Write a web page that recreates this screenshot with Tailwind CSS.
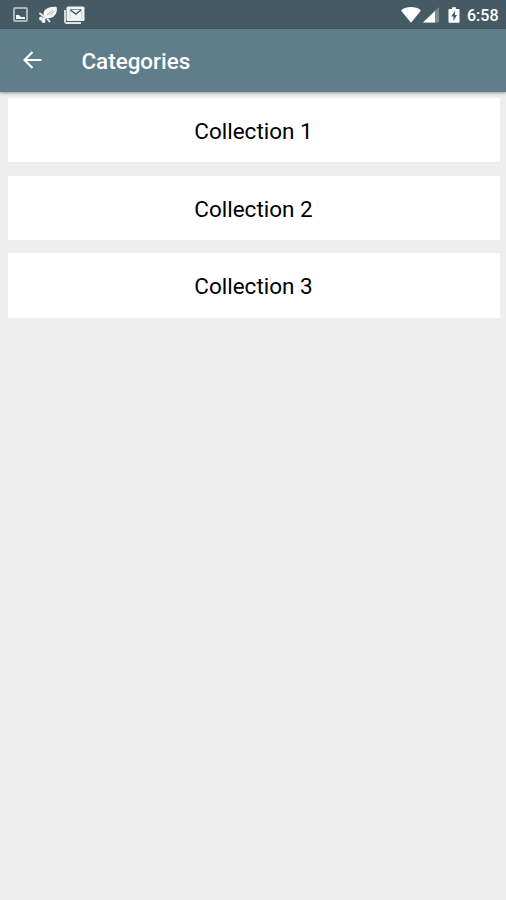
<!DOCTYPE html>
<html lang="en">
<head>
    <meta charset="UTF-8">
    <meta name="viewport" content="width=device-width, initial-scale=1.0">
    <title>Categories</title>
    <script src="https://cdn.jsdelivr.net/npm/@tailwindcss/browser@4"></script>
</head>
<body class="bg-[#eeeeee] min-h-screen font-[Roboto,sans-serif]">
    <!-- Status bar -->
    <div class="bg-[#455a64] h-[29px] flex items-center justify-between pl-[13px] pr-[8px] text-white">
        <div class="flex items-center">
            <svg class="w-[15px] h-[15px]" viewBox="0 0 15 15">
                <rect x="1" y="1" width="13" height="13" rx="1" fill="none" stroke="#a9b5ba" stroke-width="2"/>
                <path d="M3 12V8h3l2 2h4v2z" fill="#f5f7f8"/>
            </svg>
            <svg class="w-5 h-[18px] ml-[10px]" viewBox="0 0 20 18">
                <path d="M6 10C3.500 4 11 0 18.500 1C20.500 7 15 14 8 12z" fill="#f3f5f5"/>
                <path d="M9 9L15 4M12 9.500l4-4" stroke="#8f9da3" stroke-width="0.800"/>
                <path d="M8.500 10.500L4 14.500" stroke="#f3f5f5" stroke-width="2.800"/>
                <circle cx="3" cy="12.500" r="1.900" fill="#f3f5f5"/>
                <circle cx="5.500" cy="15" r="2" fill="#f3f5f5"/>
                <path d="M2 7.500l4 3M9.500 13l2 2.500" stroke="#e4e9eb" stroke-width="2" stroke-linecap="round"/>
            </svg>
            <svg class="w-[21px] h-[18px] ml-[6px]" viewBox="0 0 21 18">
                <path d="M1 4v11.500q0 1.500 1.500 1.500H17" fill="none" stroke="#e2e7e9" stroke-width="1.800"/>
                <rect x="2.500" y="0.500" width="18" height="14.500" rx="1.500" fill="#f1f4f5"/>
                <path d="M6 12.500V4M17.500 4v8.500" fill="none" stroke="#c5cdd0" stroke-width="0.800"/>
                <path d="M6 3.500h11.500" stroke="#84939a" stroke-width="1"/>
                <path d="M6.500 4l5.300 4 5.300-4" fill="none" stroke="#455a64" stroke-width="1.500"/>
            </svg>
        </div>
        <div class="flex items-center">
            <svg class="w-5 h-4" viewBox="0 0 20 16">
                <path d="M10 15.700L0 3.400C5.500-1 14.500-1 20 3.400z" fill="#fff"/>
            </svg>
            <svg class="w-4 h-4 ml-[2px]" viewBox="0 0 16 16">
                <path d="M16 0v15.500H0z" fill="#7c8b92"/>
                <path d="M12 4v11.500H0z" fill="#fff"/>
            </svg>
            <svg class="w-3 h-4 ml-[9px]" viewBox="0 0 12 16">
                <path d="M1.300 2H4V0.300h4V2h2.700q.8 0 .8.800v12.200q0 .8-.8.800H1.300q-.8 0-.8-.8V2.800q0-.8.800-.8z" fill="#fff"/>
                <path d="M7.300 3.500L3.200 9.500h2.300v4.500l3.500-6H6.800z" fill="#455a64"/>
            </svg>
            <span class="ml-[7px] w-[31px] text-[16px] leading-5 font-medium whitespace-nowrap mt-[2px]">6:58</span>
        </div>
    </div>

    <!-- App bar -->
    <header class="relative bg-[#607d8b] h-[63px] flex items-center pl-[23px] text-white shadow-[0_1px_3px_rgba(0,0,0,0.4)]">
        <svg class="w-[19px] h-[18px] mb-[1px]" viewBox="0 0 19 18">
            <path d="M18.500 9H1.800M9.500 1L1.500 9l8 8" fill="none" stroke="#fff" stroke-width="2.100"/>
        </svg>
        <h1 class="ml-[39.500px] text-[22.400px] leading-7 font-medium">Categories</h1>
    </header>

    <!-- Collections -->
    <main class="flex flex-col gap-[13.500px] pt-[6px] pl-2 pr-[6px] text-center text-[22.500px] text-black">
        <div class="bg-white h-[64.200px] leading-[66px] pr-[1px]">Collection 1</div>
        <div class="bg-white h-[64.200px] leading-[66px] pr-[1px]">Collection 2</div>
        <div class="bg-white h-[64.200px] leading-[67px] pr-[1px]">Collection 3</div>
    </main>
</body>
</html>
